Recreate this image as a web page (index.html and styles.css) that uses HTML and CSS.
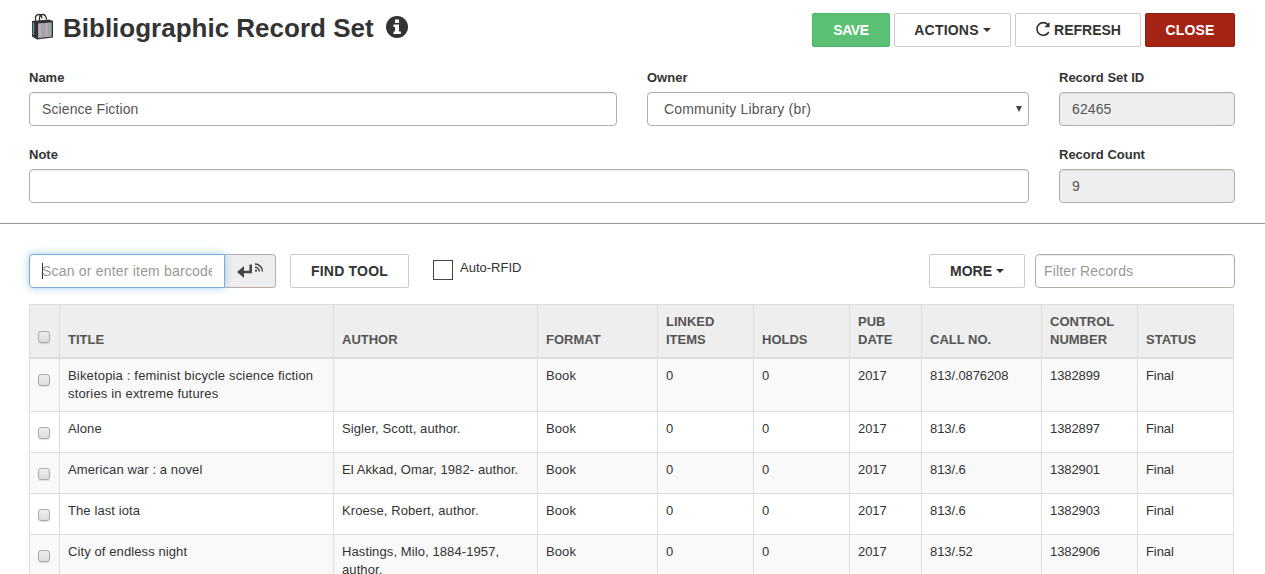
FILE: index.html
```html
<!DOCTYPE html>
<html lang="en">
<head>
<meta charset="utf-8">
<title>Bibliographic Record Set</title>
<link rel="stylesheet" href="styles.css">
</head>
<body>
<header class="page-head">
  <svg class="bag" width="24" height="28" viewBox="0 0 24 28"><path d="M5.500 8V4.500Q6 1.500 9 1.500q2.500 0 3 4M9.500 8V4.500Q10 1.500 13 1.500q3 0 3.500 5" fill="none" stroke="#333" stroke-width="1.300"/><path d="M2 8l17-1.500 4 1.500v16.500L7 26.500l-5-3z" fill="#333"/><path d="M3.500 9.500v12.500" stroke="#6f98ab" stroke-width="1.300"/><path d="M8 10.500l13.700-1v14L8 25z" fill="#a3a0a5"/><path d="M10 10.500v14.200M16.500 10v14" stroke="#c8a5c8" stroke-width="2"/><path d="M12.500 10.300v14.200M20 9.700v14" stroke="#91b696" stroke-width="1.500"/></svg>
  <h1>Bibliographic Record Set</h1>
  <svg class="info" width="22" height="22" viewBox="0 0 22 22"><circle cx="11" cy="11" r="11" fill="#333"/><path d="M9 3.500h4v3.500H9zM7.500 8.500H13v7h1.800V18H7.500v-2.500H9V11H7.500z" fill="#fff"/></svg>
  <div class="actions">
    <button class="btn save">SAVE</button>
    <button class="btn menu">ACTIONS<i class="caret"></i></button>
    <button class="btn refresh"><svg width="16" height="16" viewBox="0 0 16 16"><path d="M13 3.800A6.300 6.300 0 1 0 13.800 11" fill="none" stroke="#333" stroke-width="1.600"/><path d="M14.600 1v5.300H9.300z" fill="#333"/></svg>REFRESH</button>
    <button class="btn close">CLOSE</button>
  </div>
</header>
<section class="form">
  <div class="field name"><label>Name</label><div class="control">Science Fiction</div></div>
  <div class="field"><label>Owner</label><div class="control select">Community Library (br)<svg width="6" height="6" viewBox="0 0 6 6"><path d="M0 0h6L3 6z" fill="#444"/></svg></div></div>
  <div class="field"><label>Record Set ID</label><div class="control readonly">62465</div></div>
  <div class="field note"><label>Note</label><div class="control"></div></div>
  <div class="field"><label>Record Count</label><div class="control readonly">9</div></div>
</section>
<section class="toolbar">
  <div class="scan"><div class="scan-text"><span>Scan or enter item barcode</span></div></div>
  <div class="enter"><svg width="28" height="18" viewBox="0 0 28 18"><path d="M14.700 2.500v7.500H6" fill="none" stroke="#444" stroke-width="2.500"/><path d="M1 10l7-6v12z" fill="#444"/><path d="M19 2a7.500 7.500 0 0 1 7.500 7.500M19 5.200a4.300 4.300 0 0 1 4.300 4.300" fill="none" stroke="#444" stroke-width="1.500"/><circle cx="20" cy="8.700" r="1.100" fill="#444"/></svg></div>
  <button class="btn find">FIND TOOL</button>
  <span class="box"></span><span class="rfid">Auto-RFID</span>
  <button class="btn more">MORE<i class="caret"></i></button>
  <input class="filter" placeholder="Filter Records">
</section>
<table class="records">
  <colgroup><col class="c30"><col class="c274"><col class="c204"><col class="c120"><col class="c96"><col class="c96"><col class="c72"><col class="c120"><col class="c96"><col class="c96"></colgroup>
  <thead><tr><th class="pick"><i class="check"></i></th><th>TITLE</th><th>AUTHOR</th><th>FORMAT</th><th>LINKED<br>ITEMS</th><th>HOLDS</th><th>PUB<br>DATE</th><th>CALL NO.</th><th>CONTROL<br>NUMBER</th><th>STATUS</th></tr></thead>
  <tbody>
    <tr><td class="pick"><i class="check"></i></td><td class="title">Biketopia : feminist bicycle science fiction<br>stories in extreme futures</td><td></td><td>Book</td><td>0</td><td>0</td><td>2017</td><td>813/.0876208</td><td>1382899</td><td>Final</td></tr>
    <tr><td class="pick"><i class="check"></i></td><td>Alone</td><td>Sigler, Scott, author.</td><td>Book</td><td>0</td><td>0</td><td>2017</td><td>813/.6</td><td>1382897</td><td>Final</td></tr>
    <tr><td class="pick"><i class="check"></i></td><td>American war : a novel</td><td>El Akkad, Omar, 1982- author.</td><td>Book</td><td>0</td><td>0</td><td>2017</td><td>813/.6</td><td>1382901</td><td>Final</td></tr>
    <tr><td class="pick"><i class="check"></i></td><td>The last iota</td><td>Kroese, Robert, author.</td><td>Book</td><td>0</td><td>0</td><td>2017</td><td>813/.6</td><td>1382903</td><td>Final</td></tr>
    <tr><td class="pick"><i class="check"></i></td><td>City of endless night</td><td>Hastings, Milo, 1884-1957,<br>author.</td><td>Book</td><td>0</td><td>0</td><td>2017</td><td>813/.52</td><td>1382906</td><td>Final</td></tr>
  </tbody>
</table>
</body>
</html>
```

FILE: styles.css
```css
* { box-sizing: border-box; }
html { overflow: hidden; }
body { margin: 0; height: 574px; overflow: hidden; background: #fff; color: #333; font: 13px/18px "Liberation Sans", Arial, sans-serif; letter-spacing: .1px; }
.page-head { display: flex; align-items: flex-start; height: 70px; padding: 13px 30px 0 30px; }
.bag { flex: none; }
h1 { margin: 0 0 0 9px; font-size: 26px; line-height: 30px; font-weight: bold; letter-spacing: 0; white-space: nowrap; }
.info { margin: 3px 0 0 12px; }
.actions { display: flex; gap: 4px; margin-left: auto; }
.btn { display: flex; align-items: center; justify-content: center; flex: none; height: 34px; padding: 0; border: 1px solid #ccc; border-radius: 2px; background: #fff; color: #333; font: bold 14px/20px "Liberation Sans", Arial, sans-serif; letter-spacing: .2px; }
.save { width: 78px; background: #5bbf74; border-color: #48b765; color: #fff; letter-spacing: -.4px; }
.menu { width: 117px; }
.refresh { width: 126px; letter-spacing: 0; }
.refresh svg { margin: -3px 3px 0 0; }
.close { width: 90px; background: #a52315; border-color: #911f12; color: #fff; }
.caret { margin-left: 4px; border: 4px solid transparent; border-top-color: #333; border-bottom: 0; }
.form { display: grid; grid-template-columns: 588px 382px 176px; column-gap: 30px; padding-left: 29px; height: 154px; border-bottom: 1px solid #999; }
.field { height: 77px; }
.note { grid-column: span 2; }
label { display: block; height: 22px; line-height: 15px; font-weight: bold; letter-spacing: 0; }
.control, .filter { height: 34px; padding: 0 12px; border: 1px solid #b5aea8; border-radius: 4px; background: #fff; box-shadow: inset 0 1px 1px rgba(0, 0, 0, .075); color: #555; font-size: 14px; line-height: 32px; }
.select { display: flex; align-items: center; justify-content: space-between; padding: 0 6px 0 16px; box-shadow: none; letter-spacing: .18px; }
.readonly { background: #eee; }
.toolbar { display: flex; align-items: flex-start; height: 80px; padding: 30px 30px 0 29px; }
.scan { position: relative; width: 196px; height: 34px; padding: 0 12px; border: 1px solid #7facd5; border-radius: 4px 0 0 4px; background: #fff; box-shadow: 0 0 8px rgba(102, 175, 233, .6); }
.scan-text { overflow: hidden; height: 16px; margin-top: 8px; border-left: 1px solid #333; color: #999; font-size: 14px; line-height: 16px; letter-spacing: .2px; white-space: nowrap; }
.scan-text span { margin-left: -1px; }
.enter { display: flex; align-items: center; justify-content: center; width: 51px; height: 34px; border: 1px solid #b5aea8; border-left: 0; border-radius: 0 4px 4px 0; background: #eee; }
.find { width: 119px; margin-left: 14px; }
.box { width: 20px; height: 20px; margin: 6px 0 0 24px; border: 1px solid #444; }
.rfid { margin: 5px 0 0 7px; letter-spacing: 0; font-size: 13px; line-height: 18px; }
.more { width: 96px; margin-left: auto; letter-spacing: 0; }
.filter { width: 200px; margin-left: 10px; padding: 0 8px; font-family: "Liberation Sans", Arial, sans-serif; letter-spacing: .15px; }
.filter::placeholder { color: #999; opacity: 1; }
.records { width: 1205px; margin-left: 29px; table-layout: fixed; border-collapse: separate; border-spacing: 0; border-top: 1px solid #ddd; border-left: 1px solid #ddd; }
.c30 { width: 30px; }
.c274 { width: 274px; }
.c204 { width: 204px; }
.c120 { width: 120px; }
.c96 { width: 96px; }
.c72 { width: 72px; }
th, td { padding: 8px; border-right: 1px solid #ddd; border-bottom: 1px solid #ddd; text-align: left; white-space: nowrap; }
th { height: 54px; border-bottom-width: 2px; background: #eee; color: #555; vertical-align: bottom; letter-spacing: 0; }
td { height: 41px; vertical-align: top; }
td:nth-child(n+7) { letter-spacing: -.1px; }
td.title { letter-spacing: .17px; }
tbody tr:nth-child(odd) { background: #f9f9f9; }
.pick { padding: 15px 8px 0; }
th.pick { padding: 26px 8px 0; vertical-align: top; }
.check { display: block; width: 12px; height: 12px; border: 1px solid #aaa; border-radius: 3px; background: linear-gradient(#eee, #ddd); box-shadow: 0 1px 1px rgba(0, 0, 0, .12); }
```
